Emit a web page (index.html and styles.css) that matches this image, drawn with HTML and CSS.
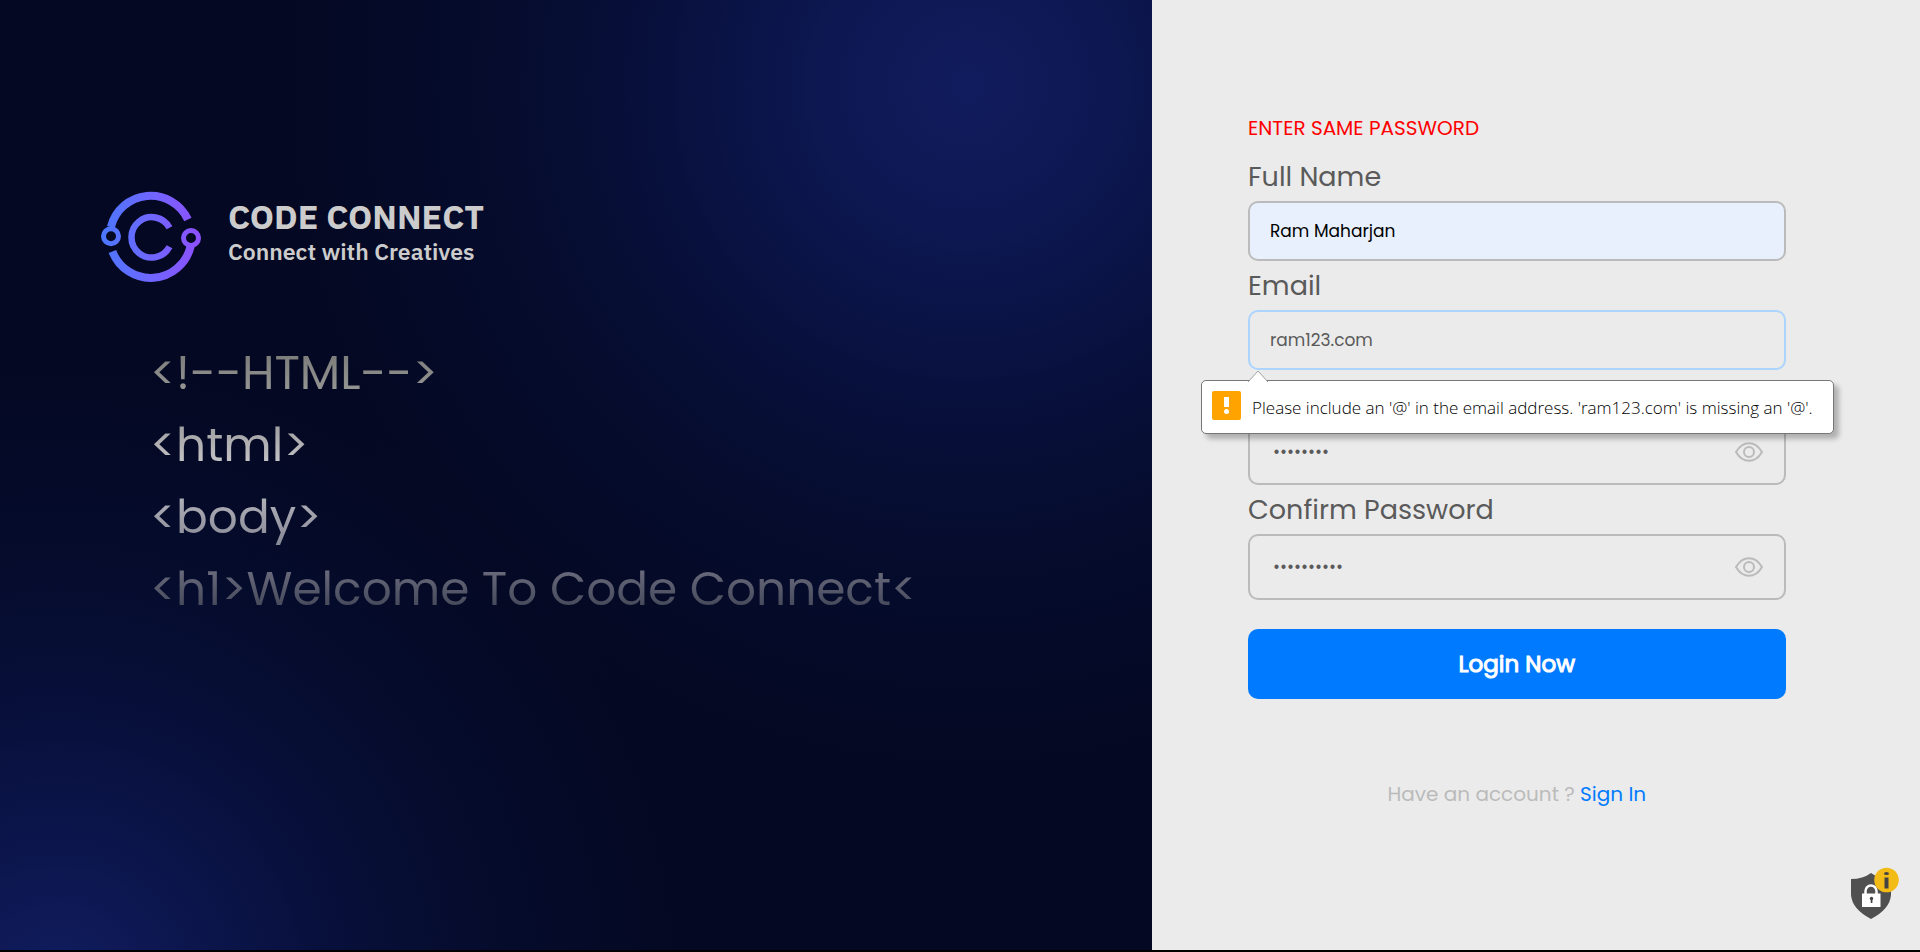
FILE: index.html
```html
<!DOCTYPE html>
<html lang="en">
<head>
<meta charset="utf-8">
<meta name="viewport" content="width=device-width, initial-scale=1">
<title>Code Connect</title>
<link rel="stylesheet" href="styles.css">
</head>
<body>
<main class="page">
  <section class="hero">
    <div class="brand">
      <svg class="brand-logo" viewBox="0 0 104 98" fill="none" stroke="url(#brandGradient)" aria-hidden="true">
        <defs>
          <linearGradient id="brandGradient" gradientUnits="userSpaceOnUse" x1="0" y1="49" x2="102" y2="49">
            <stop offset="0" stop-color="#4a78ff"/>
            <stop offset="0.5" stop-color="#6f66ff"/>
            <stop offset="1" stop-color="#8f4fff"/>
          </linearGradient>
        </defs>
        <path stroke-width="8" d="M10.900 39A41 41 0 0 1 87.900 31.500"/>
        <path stroke-width="8" d="M12.400 63.500A41 41 0 0 0 90.700 58"/>
        <path stroke-width="6.500" d="M69.500 39.800A20.200 20.200 0 1 0 69.500 58.800"/>
        <circle cx="11" cy="48.300" r="7.500" stroke-width="5"/>
        <circle cx="91" cy="50" r="7.500" stroke-width="5"/>
      </svg>
      <div class="brand-text">
        <p class="brand-name">CODE CONNECT</p>
        <p class="brand-tagline">Connect with Creatives</p>
      </div>
    </div>
    <div class="code">
      <p>&lt;!--HTML--&gt;</p>
      <p>&lt;html&gt;</p>
      <p>&lt;body&gt;</p>
      <p>&lt;h1&gt;Welcome To Code Connect&lt;</p>
    </div>
  </section>

  <section class="panel">
    <form class="form" novalidate>
      <p class="error">ENTER SAME PASSWORD</p>

      <label class="label" for="name">Full Name</label>
      <div class="box box-filled">
        <input class="input" id="name" type="text" value="Ram Maharjan">
      </div>

      <label class="label" for="email">Email</label>
      <div class="box box-active">
        <input class="input" id="email" type="email" value="ram123.com">
        <div class="tip" role="alert">
          <svg class="tip-arrow" viewBox="0 0 22 12" aria-hidden="true"><path d="M1 12L11 1L21 12" fill="#fff" stroke="#a0a0a0"/></svg>
          <svg class="tip-icon" viewBox="0 0 29 29" aria-hidden="true"><rect width="29" height="29" rx="2" fill="#ffa300"/><path d="M12 6h5v10h-5z" fill="#fff"/><circle cx="14.5" cy="20.5" r="2.5" fill="#fff"/></svg>
          <span>Please include an '@' in the email address. 'ram123.com' is missing an '@'.</span>
        </div>
      </div>

      <label class="label label-covered" for="password">Password</label>
      <div class="box box-tall">
        <input class="input input-secret" id="password" type="password" aria-label="Password" value="password">
        <button class="eye" type="button" aria-label="Show password">
          <svg viewBox="0 0 28 20" fill="none" stroke="currentColor" stroke-width="2"><path d="M1 10C4.500 4 9 1.200 14 1.200S23.500 4 27 10C23.500 16 19 18.800 14 18.800S4.500 16 1 10Z"/><circle cx="14" cy="10" r="5"/></svg>
        </button>
      </div>

      <label class="label" for="confirm">Confirm Password</label>
      <div class="box box-tall">
        <input class="input input-secret" id="confirm" type="password" value="password12">
        <button class="eye" type="button" aria-label="Show confirmed password">
          <svg viewBox="0 0 28 20" fill="none" stroke="currentColor" stroke-width="2"><path d="M1 10C4.500 4 9 1.200 14 1.200S23.500 4 27 10C23.500 16 19 18.800 14 18.800S4.500 16 1 10Z"/><circle cx="14" cy="10" r="5"/></svg>
        </button>
      </div>

      <button class="submit" type="submit">Login Now</button>
      <p class="switch">Have an account ? <a href="#signin">Sign In</a></p>
    </form>
    <button class="shield" type="button" aria-label="Privacy information">
      <svg viewBox="0 0 50 54" aria-hidden="true">
        <path d="M1 13Q13 13 21 7Q29 13 41 13V29Q40 43 21 53Q2 43 1 29Z" fill="#505050"/>
        <path d="M15.500 29V25a5.500 5.500 0 0 1 11 0V29" fill="none" stroke="#fff" stroke-width="2.500"/>
        <rect x="12" y="27.500" width="18.500" height="13.500" fill="#fff"/>
        <circle cx="21.500" cy="32.500" r="1.700" fill="#444"/><path d="M20.700 33h1.700v4h-1.700z" fill="#444"/>
        <circle cx="36.500" cy="14" r="12.300" fill="#f2bb16"/>
        <path d="M34.500 11.500h4v11h-4z" fill="#444"/><ellipse cx="36.500" cy="7.500" rx="2.500" ry="1.600" fill="#444"/>
      </svg>
    </button>
  </section>
</main>
</body>
</html>
```
FILE: styles.css
```css
* {
  box-sizing: border-box;
}

body {
  margin: 0;
  background: #000;
  font-family: Poppins, Inter, "Liberation Sans", sans-serif;
}

p {
  margin: 0;
}

.page {
  display: grid;
  grid-template-columns: 3fr 2fr;
  min-height: calc(100vh - 2px);
  margin-bottom: 2px;
}

.hero {
  padding: 188px 96px 0 100px;
  background:
    radial-gradient(circle at 84% 9%, #111c5e 0, rgba(14, 25, 86, 0.9) 150px, rgba(9, 20, 72, 0.7) 310px, rgba(6, 16, 56, 0.45) 480px, rgba(4, 8, 34, 0) 700px),
    radial-gradient(circle at 5% 104%, #111d60 0, rgba(14, 25, 86, 0.9) 110px, rgba(9, 20, 72, 0.7) 260px, rgba(6, 16, 56, 0.45) 430px, rgba(4, 8, 34, 0) 640px),
    #040822;
}

.brand {
  display: flex;
  align-items: flex-start;
  gap: 24px;
}

.brand-logo {
  width: 104px;
  height: 98px;
}

.brand-text {
  padding-top: 8px;
  color: #ccc;
  font-family: "IBM Plex Sans", "Noto Sans", sans-serif;
}

.brand-name {
  font-size: 34px;
  font-weight: 700;
  line-height: 41px;
}

.brand-tagline {
  font-size: 23px;
  font-weight: 600;
  line-height: 28px;
}

.code {
  margin: 51px 0 0 50px;
  font-size: 47px;
  font-weight: 400;
  line-height: 72px;
  color: transparent;
  background: linear-gradient(#707070 0, #949492 18%, #9c9c9e 30%, #c2c2c4 43%, #acadb5 57%, #8a8b98 71%, #696a7c 81%, #474b5c 93%);
  background-clip: text;
  -webkit-background-clip: text;
}

.panel {
  position: relative;
  padding: 104px 0 0 12.5%;
  background: #ebebeb;
}

.form {
  width: 80%;
}

.error {
  color: #f00;
  font-size: 20px;
  line-height: 48px;
}

.label {
  display: block;
  color: #5a5a5a;
  font-size: 27px;
  line-height: 49px;
}

.label-covered {
  visibility: hidden;
}

.box {
  position: relative;
  display: flex;
  align-items: center;
  height: 60px;
  padding: 0 21px 0 20px;
  border: 2px solid #bbb;
  border-radius: 10px;
}

.box-filled {
  background: #e8f0fe;
}

.box-filled .input {
  color: #000;
}

.box-active {
  border-color: #abd4ff;
}

.box-tall {
  height: 66px;
}

.input {
  flex: 1;
  min-width: 0;
  padding: 0;
  border: 0;
  outline: 0;
  background: none;
  color: #5a5a5a;
  font: inherit;
  font-size: 17px;
}

.input-secret {
  padding-left: 3px;
}

.eye {
  display: flex;
  padding: 0;
  border: 0;
  background: none;
  color: #bbb;
}

.eye svg {
  width: 28px;
  height: 20px;
}

.tip {
  position: absolute;
  z-index: 1;
  top: 68px;
  left: -49px;
  display: flex;
  align-items: flex-start;
  gap: 11px;
  padding: 10px 20px 8px 10px;
  border: 1px solid #777;
  border-radius: 5px;
  background: #fff;
  box-shadow: 5px 5px 5px rgba(0, 0, 0, 0.25);
  color: #000;
  font-family: "Segoe UI", "Open Sans", sans-serif;
  font-size: 17px;
  font-weight: 300;
  line-height: 34px;
  white-space: nowrap;
}

.tip-arrow {
  position: absolute;
  top: -11px;
  left: 45px;
  width: 22px;
  height: 12px;
}

.tip-icon {
  width: 29px;
  height: 29px;
}

.submit {
  width: 100%;
  height: 70px;
  margin-top: 29px;
  border: 0;
  border-radius: 10px;
  background: #007bff;
  color: #fff;
  font: inherit;
  font-size: 23px;
  -webkit-text-stroke: 1px #fff;
}

.switch {
  margin-top: 80px;
  color: #bbb;
  font-size: 20px;
  line-height: 30px;
  text-align: center;
}

.switch a {
  color: #007bff;
  text-decoration: none;
}

.shield {
  position: absolute;
  right: 20px;
  bottom: 30px;
  padding: 0;
  border: 0;
  background: none;
}

.shield svg {
  display: block;
  width: 50px;
  height: 54px;
}
```
